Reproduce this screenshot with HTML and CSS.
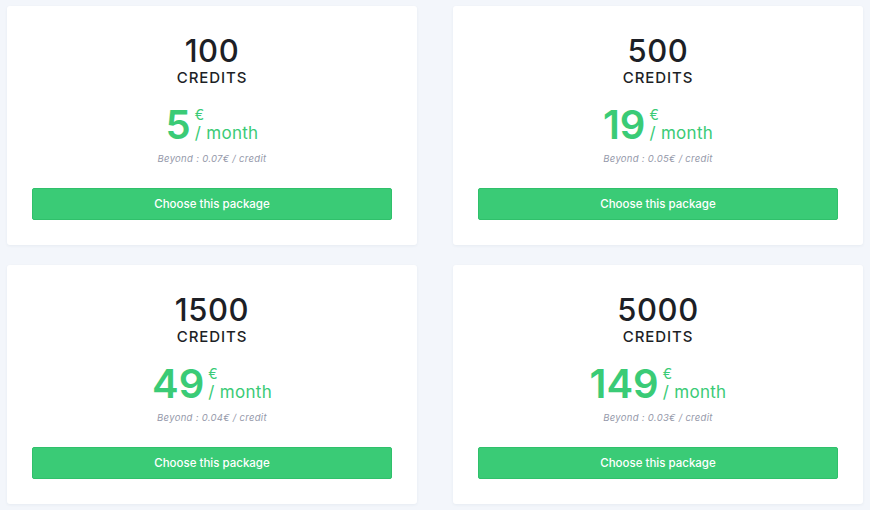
FILE: index.html
```html
<!DOCTYPE html>
<html lang="en">
<head>
  <meta charset="UTF-8">
  <meta name="viewport" content="width=device-width, initial-scale=1.0">
  <title>Credit Packages</title>
  <link rel="stylesheet" href="styles.css">
</head>
<body>

<div class="packages">
  <!-- 100 credits -->
  <div class="card">
    <div class="amount">100</div>
    <div class="unit">CREDITS</div>
    <div class="price">
      <span class="price-value">5</span>
      <span class="price-side">
        <span class="currency">€</span>
        <span class="period">/ month</span>
      </span>
    </div>
    <div class="beyond">Beyond : 0.07€ / credit</div>
    <button type="button" class="btn-choose">Choose this package</button>
  </div>

  <!-- 500 credits -->
  <div class="card">
    <div class="amount">500</div>
    <div class="unit">CREDITS</div>
    <div class="price">
      <span class="price-value">19</span>
      <span class="price-side">
        <span class="currency">€</span>
        <span class="period">/ month</span>
      </span>
    </div>
    <div class="beyond">Beyond : 0.05€ / credit</div>
    <button type="button" class="btn-choose">Choose this package</button>
  </div>

  <!-- 1500 credits -->
  <div class="card">
    <div class="amount">1500</div>
    <div class="unit">CREDITS</div>
    <div class="price">
      <span class="price-value">49</span>
      <span class="price-side">
        <span class="currency">€</span>
        <span class="period">/ month</span>
      </span>
    </div>
    <div class="beyond">Beyond : 0.04€ / credit</div>
    <button type="button" class="btn-choose">Choose this package</button>
  </div>

  <!-- 5000 credits -->
  <div class="card">
    <div class="amount">5000</div>
    <div class="unit">CREDITS</div>
    <div class="price">
      <span class="price-value">149</span>
      <span class="price-side">
        <span class="currency">€</span>
        <span class="period">/ month</span>
      </span>
    </div>
    <div class="beyond">Beyond : 0.03€ / credit</div>
    <button type="button" class="btn-choose">Choose this package</button>
  </div>
</div>

</body>
</html>
```

FILE: styles.css
```css
/* Global */
body {
  margin: 0;
  padding: 6px 7px;
  background-color: #f3f6fb;
  font-family: Inter, "Noto Sans", sans-serif;
  color: #1d1f26;
  overflow: hidden;
}

.packages {
  display: grid;
  grid-template-columns: 410px 410px;
  column-gap: 36px;
  row-gap: 20px;
}

/* Card */
.card {
  background-color: #ffffff;
  border-radius: 3px;
  box-shadow: 0 1px 3px rgba(40, 60, 100, 0.06);
  padding: 30px 25px 25px;
  display: flex;
  flex-direction: column;
  align-items: center;
}

.amount {
  font-size: 31px;
  font-weight: 500;
  line-height: 30px;
  letter-spacing: 0.6px;
}

.unit {
  font-size: 15px;
  font-weight: 500;
  letter-spacing: 0.9px;
  line-height: 18px;
  margin-top: 3px;
}

/* Price */
.price {
  display: flex;
  align-items: flex-end;
  margin-top: 19px;
  color: #3acb76;
}

.price-value {
  font-size: 40px;
  font-weight: 600;
  line-height: 36px;
}

.price-side {
  display: flex;
  flex-direction: column;
  margin-left: 4px;
}

.currency {
  font-size: 14px;
  line-height: 17px;
}

.period {
  font-size: 17px;
  line-height: 21px;
  letter-spacing: 0.3px;
  margin-bottom: -1px;
}

.beyond {
  margin-top: 10px;
  font-size: 9.5px;
  font-style: italic;
  color: #9599aa;
  letter-spacing: 0.3px;
}

/* Button */
.btn-choose {
  margin-top: 24px;
  width: 100%;
  height: 32px;
  background-color: #3acb76;
  border: 1px solid #30c06b;
  border-radius: 2px;
  color: #ffffff;
  font-family: Inter, "Noto Sans", sans-serif;
  font-size: 11.5px;
  font-weight: 500;
  cursor: pointer;
}
```
